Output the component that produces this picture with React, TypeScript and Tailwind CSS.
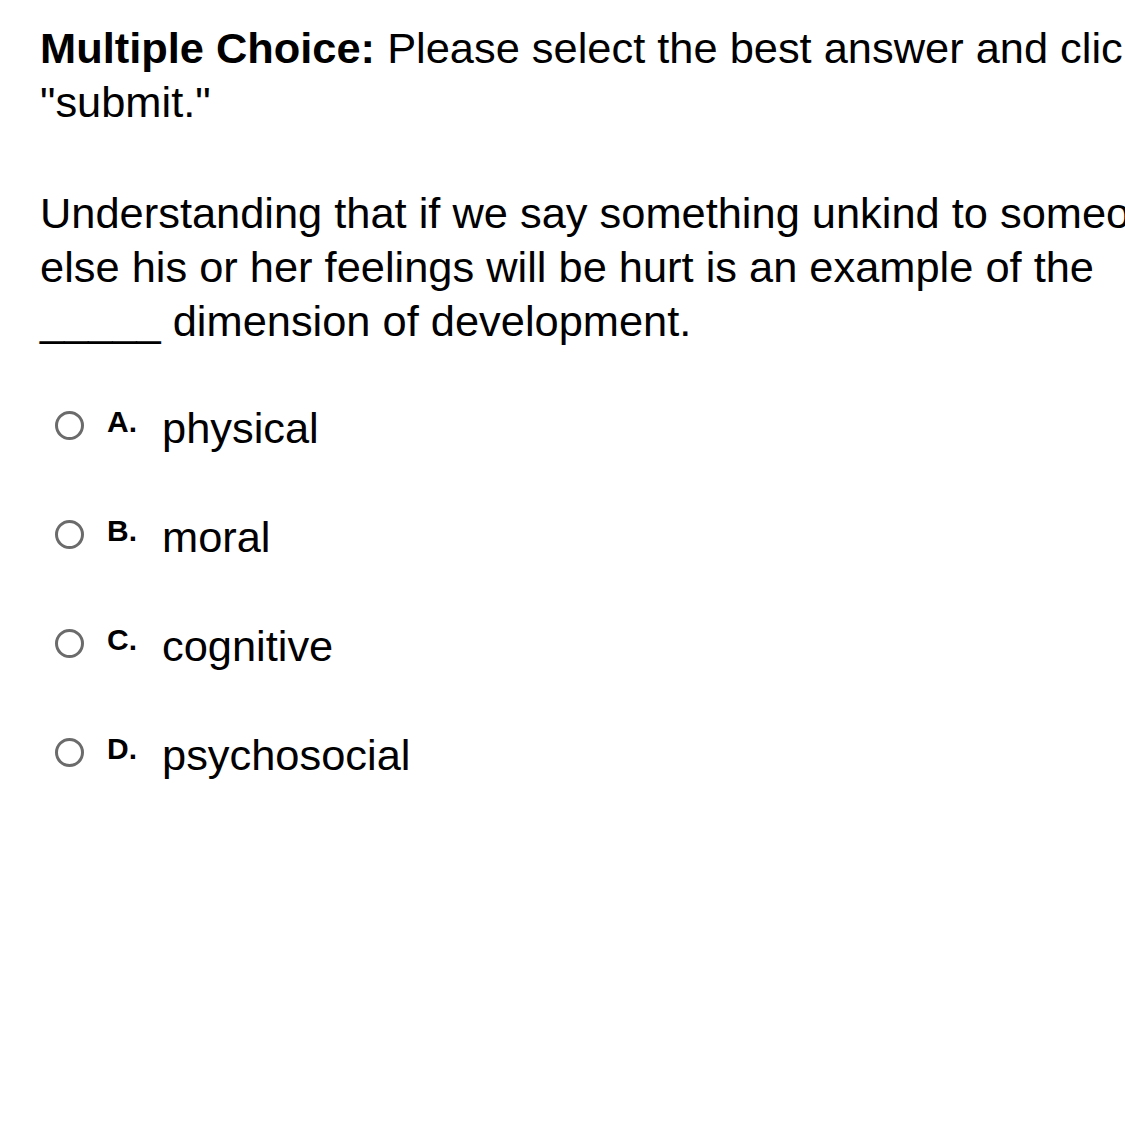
const options = [
  { letter: "A.", text: "physical" },
  { letter: "B.", text: "moral" },
  { letter: "C.", text: "cognitive" },
  { letter: "D.", text: "psychosocial" },
];

export default function App() {
  return (
    <div className="w-[1125px] h-[1125px] overflow-hidden bg-white text-black font-['Liberation_Sans',Arial,sans-serif]">
      <div className="w-[1200px] pl-[40px] pt-[21px]">
        <p className="text-[43.4px] leading-[54px]">
          <span className="font-bold">Multiple Choice:</span> Please select the best answer and click "submit."
        </p>
        <p className="mt-[57px] text-[43.4px] leading-[54px]">
          Understanding that if we say something unkind to someone else his or her feelings will be hurt is an
          example of the _____ dimension of development.
        </p>
        <div className="mt-[53px] flex flex-col gap-[55px]">
          {options.map((o) => (
            <div key={o.letter} className="flex items-start h-[54px]">
              <span className="mt-[10px] ml-[15px] w-[29px] h-[29px] rounded-full border-[3px] border-[#6b6b6b] shrink-0" />
              <span className="mt-[6px] ml-[23px] w-[55px] text-[30px] leading-[30px] font-bold">{o.letter}</span>
              <span className="text-[43.4px] leading-[54px]">{o.text}</span>
            </div>
          ))}
        </div>
      </div>
    </div>
  );
}
